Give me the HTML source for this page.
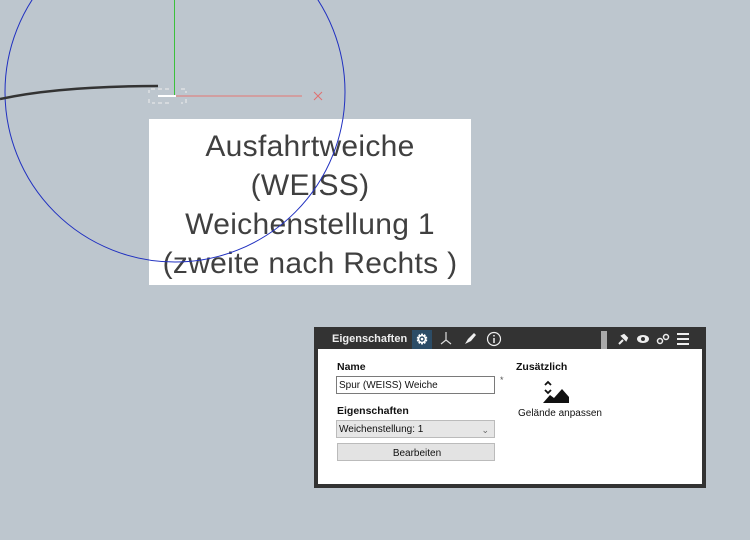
<!DOCTYPE html>
<html><head><meta charset="utf-8"><style>
body{margin:0;width:750px;height:540px;background:#bdc6ce;position:relative;overflow:hidden;font-family:"Liberation Sans",sans-serif}
.lbl{position:absolute;left:149px;top:119px;width:322px;height:166px;background:#fff;color:#404040;font-size:30px;text-align:center;line-height:39px;padding-top:8px;box-sizing:border-box;letter-spacing:0.3px}
svg.ov{position:absolute;left:0;top:0}
.panel{position:absolute;left:314px;top:327px;width:392px;height:161px;background:#333}
.hdr{position:absolute;left:0;top:0;width:392px;height:22px;color:#eee;font-size:11px;font-weight:bold}
.content{position:absolute;left:4px;top:22px;width:384px;height:135px;background:#fff;font-size:11px;color:#111}
.b{font-weight:bold;position:absolute;font-size:10.5px}
.inp{position:absolute;border:1px solid #7a7a7a;background:#fff;font-size:10px;padding-left:2px;box-sizing:border-box;line-height:17px}
.sel{position:absolute;background:#e6e6e6;border:1px solid #bbb;font-size:10px;box-sizing:border-box;padding-left:2px;line-height:18px}
</style></head><body>
<div class="lbl">Ausfahrtweiche<br>(WEISS)<br>Weichenstellung 1<br>(zweite nach Rechts )</div>
<svg class="ov" width="750" height="540">
<circle cx="175" cy="92" r="170" fill="none" stroke="#2030c0" stroke-width="1"/>
<line x1="174.5" y1="0" x2="174.5" y2="96" stroke="#3cc03c" stroke-width="1"/>
<line x1="175" y1="96" x2="302" y2="96" stroke="#d89090" stroke-width="1.5"/>
<path d="M314 92 L322 100 M322 92 L314 100" stroke="#e07070" stroke-width="1"/>
<path d="M0 99 Q60 86 158 86" stroke="#333" stroke-width="2.5" fill="none"/>
<line x1="158" y1="96" x2="176" y2="96" stroke="#fff" stroke-width="2"/>
<path d="M155 89 H149 V93 M149 99 V103 H155 M181 89 H186 V93 M186 99 V103 H181 M158 89 H172 M158 103 H172" stroke="#eee" stroke-width="1" fill="none" stroke-dasharray="4 3"/>
</svg>
<div class="panel">
<div class="hdr">
<span style="position:absolute;left:18px;top:6px">Eigenschaften</span>
<div style="position:absolute;left:98px;top:3px;width:20px;height:19px;background:#2c4c66;border-bottom:2px solid #3ca03c;color:#fff;text-align:center;font-size:14px;line-height:18px">⚙</div>
<svg style="position:absolute;left:124px;top:4px" width="16" height="16"><path d="M8 1V9 M8 9L3 13 M8 9L13 13" stroke="#ddd" stroke-width="1.2" fill="none"/></svg>
<svg style="position:absolute;left:148px;top:4px" width="16" height="16"><path d="M3 13L6 8L12 2L14 4L9 10Z" fill="#eee"/></svg>
<svg style="position:absolute;left:172px;top:4px" width="16" height="16"><circle cx="8" cy="8" r="6.5" stroke="#eee" fill="none" stroke-width="1.2"/><path d="M8 7V12M8 4V5.5" stroke="#eee" stroke-width="1.5"/></svg>
<div style="position:absolute;left:287px;top:4px;width:6px;height:18px;background:#aaa"></div>
<svg style="position:absolute;left:302px;top:5px" width="14" height="14"><path d="M3 12L7 8M6 4L10 8L11 6L8 3Z" stroke="#eee" stroke-width="2" fill="#eee"/></svg>
<svg style="position:absolute;left:322px;top:5px" width="14" height="14"><ellipse cx="7" cy="7" rx="6" ry="4" fill="#eee"/><circle cx="7" cy="7" r="2" fill="#333"/></svg>
<svg style="position:absolute;left:342px;top:5px" width="14" height="14"><circle cx="4" cy="9" r="2.5" stroke="#eee" fill="none" stroke-width="1.5"/><circle cx="10" cy="5" r="2.5" stroke="#eee" fill="none" stroke-width="1.5"/></svg>
<svg style="position:absolute;left:362px;top:5px" width="14" height="14"><path d="M1 2H13M1 7H13M1 12H13" stroke="#eee" stroke-width="2"/></svg>
</div>
<div class="content">
<div class="b" style="left:19px;top:12px">Name</div>
<div class="inp" style="left:18px;top:27px;width:159px;height:18px">Spur (WEISS) Weiche</div>
<div style="position:absolute;left:182px;top:26px;font-size:9px;color:#555">*</div>
<div class="b" style="left:19px;top:56px">Eigenschaften</div>
<div class="sel" style="left:18px;top:71px;width:159px;height:18px">Weichenstellung: 1<span style="position:absolute;right:5px;top:0;color:#666;font-size:9px">&#8964;</span></div>
<div class="sel" style="left:19px;top:94px;width:158px;height:18px;text-align:center;background:#e3e3e3;line-height:19px">Bearbeiten</div>
<div class="b" style="left:198px;top:12px">Zusätzlich</div>
<svg style="position:absolute;left:222px;top:31px" width="32" height="26"><path d="M5 5L8 2L11 5M5 10L8 13L11 10" stroke="#111" stroke-width="1.8" fill="none"/><path d="M3 23L10 15L14 18L22 9L29 17V23Z" fill="#111"/></svg>
<div style="position:absolute;left:200px;top:59px;font-size:10px">Gelände anpassen</div>
</div>
</div>
</body></html>
